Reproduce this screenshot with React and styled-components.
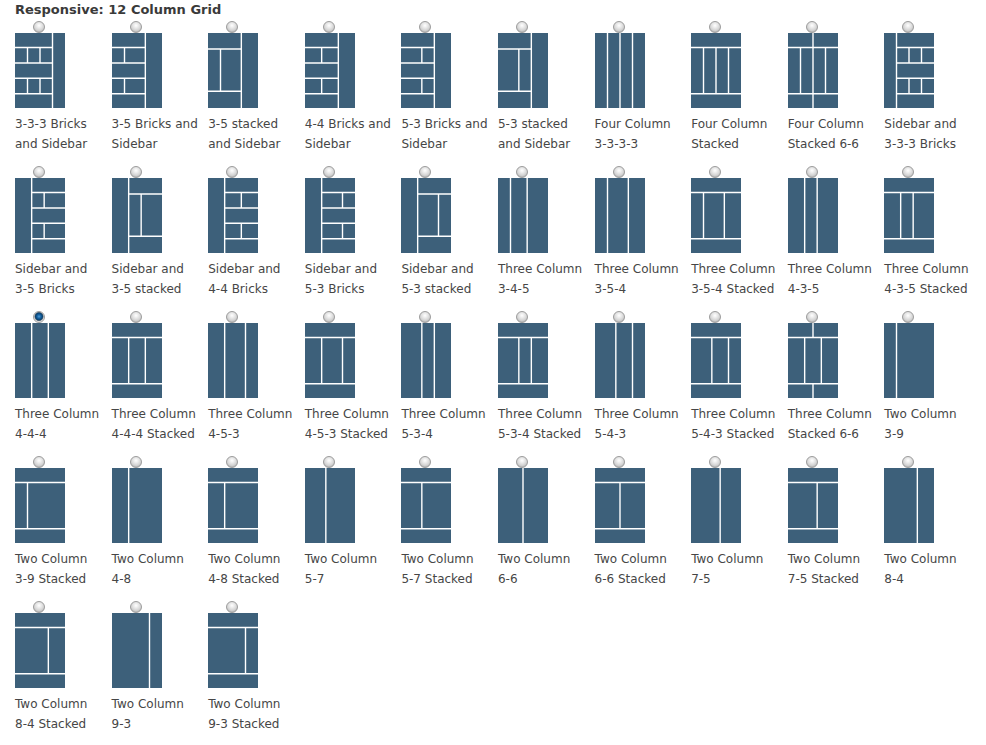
import React from "react";
import styled, { createGlobalStyle } from "styled-components";

const U = 50 / 12;
const BRICKS = [14.5, 30, 45.2, 60.8];
const STACK = [14.5, 60.8];
const SIDE_STACK = [16, 58.2];

const V = (k, y1 = 0, y2 = 75) => [k * U, y1, k * U, y2];
const H = (y, x1 = 0, x2 = 50) => [x1, y, x2, y];

const cols = (...ks) => ks.map((k) => V(k));
const stacked = (...ks) => [
  ...STACK.map((y) => H(y)),
  ...ks.map((k) => V(k, STACK[0], STACK[1])),
];
const brickSplits = (ks) =>
  ks.flatMap((k) => [V(k, BRICKS[0], BRICKS[1]), V(k, BRICKS[2], BRICKS[3])]);

// sidebar on the right
const bricksRight = (side, ...ks) => [
  V(side),
  ...BRICKS.map((y) => H(y, 0, side * U)),
  ...brickSplits(ks),
];
const stackedRight = (k) => [
  V(8),
  ...SIDE_STACK.map((y) => H(y, 0, 8 * U)),
  V(k, SIDE_STACK[0], SIDE_STACK[1]),
];

// sidebar on the left
const bricksLeft = (side, ...ks) => [
  V(side),
  ...BRICKS.map((y) => H(y, side * U, 50)),
  ...brickSplits(ks),
];
const stackedLeft = (k) => [
  V(4),
  ...SIDE_STACK.map((y) => H(y, 4 * U, 50)),
  V(k, SIDE_STACK[0], SIDE_STACK[1]),
];

const layouts = [
  { label: "3-3-3 Bricks and Sidebar", lines: bricksRight(9, 3, 6) },
  { label: "3-5 Bricks and Sidebar", lines: bricksRight(8, 3) },
  { label: "3-5 stacked and Sidebar", lines: stackedRight(3) },
  { label: "4-4 Bricks and Sidebar", lines: bricksRight(8, 4) },
  { label: "5-3 Bricks and Sidebar", lines: bricksRight(8, 5) },
  { label: "5-3 stacked and Sidebar", lines: stackedRight(5) },
  { label: "Four Column 3-3-3-3", lines: cols(3, 6, 9) },
  { label: "Four Column Stacked", lines: stacked(3, 6, 9) },
  {
    label: "Four Column Stacked 6-6",
    lines: [...STACK.map((y) => H(y)), V(6), V(3, STACK[0], STACK[1]), V(9, STACK[0], STACK[1])],
  },
  { label: "Sidebar and 3-3-3 Bricks", lines: bricksLeft(3, 6, 9) },
  { label: "Sidebar and 3-5 Bricks", lines: bricksLeft(4, 7) },
  { label: "Sidebar and 3-5 stacked", lines: stackedLeft(7) },
  { label: "Sidebar and 4-4 Bricks", lines: bricksLeft(4, 8) },
  { label: "Sidebar and 5-3 Bricks", lines: bricksLeft(4, 9) },
  { label: "Sidebar and 5-3 stacked", lines: stackedLeft(9) },
  { label: "Three Column 3-4-5", lines: cols(3, 7) },
  { label: "Three Column 3-5-4", lines: cols(3, 8) },
  { label: "Three Column 3-5-4 Stacked", lines: stacked(3, 8) },
  { label: "Three Column 4-3-5", lines: cols(4, 7) },
  { label: "Three Column 4-3-5 Stacked", lines: stacked(4, 7) },
  { label: "Three Column 4-4-4", lines: cols(4, 8), checked: true },
  { label: "Three Column 4-4-4 Stacked", lines: stacked(4, 8) },
  { label: "Three Column 4-5-3", lines: cols(4, 9) },
  { label: "Three Column 4-5-3 Stacked", lines: stacked(4, 9) },
  { label: "Three Column 5-3-4", lines: cols(5, 8) },
  { label: "Three Column 5-3-4 Stacked", lines: stacked(5, 8) },
  { label: "Three Column 5-4-3", lines: cols(5, 9) },
  { label: "Three Column 5-4-3 Stacked", lines: stacked(5, 9) },
  {
    label: "Three Column Stacked 6-6",
    lines: [
      ...STACK.map((y) => H(y)),
      V(6, 0, STACK[0]),
      V(6, STACK[1], 75),
      V(4, STACK[0], STACK[1]),
      V(8, STACK[0], STACK[1]),
    ],
  },
  { label: "Two Column 3-9", lines: cols(3) },
  { label: "Two Column 3-9 Stacked", lines: stacked(3) },
  { label: "Two Column 4-8", lines: cols(4) },
  { label: "Two Column 4-8 Stacked", lines: stacked(4) },
  { label: "Two Column 5-7", lines: cols(5) },
  { label: "Two Column 5-7 Stacked", lines: stacked(5) },
  { label: "Two Column 6-6", lines: cols(6) },
  { label: "Two Column 6-6 Stacked", lines: stacked(6) },
  { label: "Two Column 7-5", lines: cols(7) },
  { label: "Two Column 7-5 Stacked", lines: stacked(7) },
  { label: "Two Column 8-4", lines: cols(8) },
  { label: "Two Column 8-4 Stacked", lines: stacked(8) },
  { label: "Two Column 9-3", lines: cols(9) },
  { label: "Two Column 9-3 Stacked", lines: stacked(9) },
];

function Thumb({ lines }) {
  return (
    <ThumbSvg width="50" height="75" viewBox="0 0 50 75">
      <rect x="0" y="0" width="50" height="75" fill="#3d607a" />
      {lines.map(([x1, y1, x2, y2], i) => (
        <line key={i} x1={x1} y1={y1} x2={x2} y2={y2} stroke="#fff" strokeWidth="1.4" />
      ))}
    </ThumbSvg>
  );
}

export default function App() {
  return (
    <>
      <GlobalStyle />
      <Page>
        <Heading>Responsive: 12 Column Grid</Heading>
        <Grid>
          {layouts.map((l) => (
            <Option key={l.label}>
              <Radio $checked={l.checked} />
              <Thumb lines={l.lines} />
              <Label>
                {l.label.split(" ").map((w, i) => (
                  <React.Fragment key={i}>
                    {i > 0 && " "}
                    <Word>{w}</Word>
                  </React.Fragment>
                ))}
              </Label>
            </Option>
          ))}
        </Grid>
      </Page>
    </>
  );
}

// --- STYLES ---

const GlobalStyle = createGlobalStyle`
  body {
    margin: 0;
    background: #fff;
    font-family: "DejaVu Sans", Verdana, sans-serif;
  }
`;

const Page = styled.div`
  padding: 0 0 0 15px;
`;

const Heading = styled.h3`
  margin: 0;
  font-size: 13px;
  line-height: 20px;
  font-weight: bold;
  color: #3a3a3a;
`;

const Grid = styled.div`
  display: grid;
  grid-template-columns: repeat(10, 96.6px);
  row-gap: 12px;
  margin-top: 1px;
`;

const Option = styled.label`
  display: flex;
  flex-direction: column;
  align-items: flex-start;
  width: 90px;
  cursor: pointer;
`;

const Radio = styled.span`
  display: block;
  box-sizing: border-box;
  width: 12px;
  height: 12px;
  margin-left: 18px;
  border-radius: 50%;
  border: 1px solid #9c9c9c;
  background: ${(p) =>
    p.$checked
      ? "radial-gradient(circle at 50% 45%, #4d9bd8 0, #14609f 2px, #0b426f 3.5px, #5a6d7c 4.2px, #d9d9d9 4.8px, #f2f2f2 6px)"
      : "radial-gradient(circle at 50% 35%, #ffffff 0, #eeeeee 2px, #d2d2d2 5px, #bcbcbc 6px)"};
`;

const ThumbSvg = styled.svg`
  display: block;
`;

const Label = styled.span`
  display: block;
  margin-top: 6px;
  font-size: 12px;
  line-height: 20px;
  color: #464646;
`;

const Word = styled.span`
  white-space: nowrap;
`;
